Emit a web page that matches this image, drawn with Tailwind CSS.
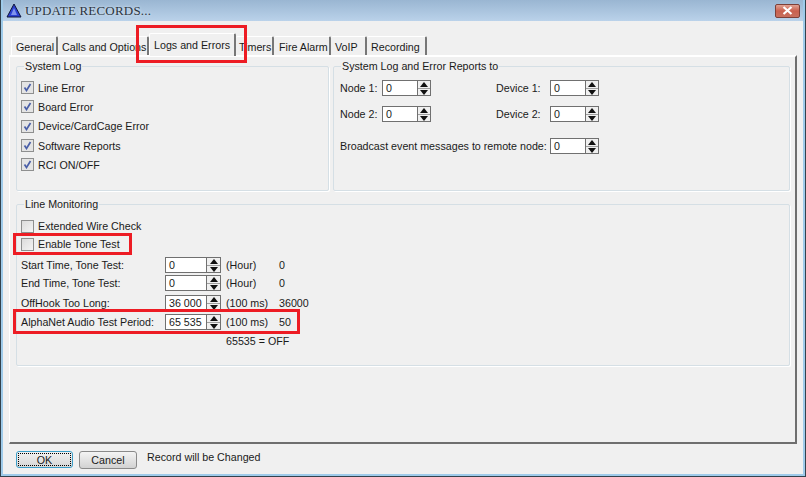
<!DOCTYPE html>
<html lang="en">
  <head>
    <meta charset="UTF-8" />
    <title>UPDATE RECORDS...</title>
    <script src="https://cdn.jsdelivr.net/npm/@tailwindcss/browser@4"></script>
  </head>
  <body class="relative w-[806px] h-[477px] overflow-hidden bg-[#f0f0f0] font-['Liberation_Sans',sans-serif] text-[10.7px] leading-[14px] text-[#1a1a1a] whitespace-nowrap">
    <div class="w-full h-full flex flex-col border-x border-b border-[#33424d]">
      <div class="h-full flex flex-col border-x-2 border-b-2 border-[#9fcbea]">
        <!-- title bar -->
        <div class="h-[21px] shrink-0 flex items-center bg-linear-to-b from-[#9ab6d2] to-[#bad2ea]">
          <svg class="ml-[3px] w-[16px] h-[15px]" viewBox="0 0 16 15">
            <path d="M8 1 L15 14 H1 Z" fill="#2a3fd0" stroke="#10163a" stroke-width="1" />
            <path d="M8 5 L11 12 H5 Z" fill="#7f93ee" />
          </svg>
          <span class="ml-[3px] font-['Liberation_Serif',serif] text-[13px] tracking-[0.2px] text-[#2b3440] [text-shadow:0_0_3px_#e8f0f8]">UPDATE RECORDS...</span>
          <div class="ml-auto mr-[3px] w-[25px] h-[14px] flex items-center justify-center rounded-[2px] border border-[#7d4038] bg-linear-to-b from-[#e0a294] via-[#c9604e] to-[#c8705e]">
            <svg class="w-[11px] h-[9px]" viewBox="0 0 11 9"><path d="M1.5 1 L9.5 8 M9.5 1 L1.5 8" stroke="#fff" stroke-width="2.2" /></svg>
          </div>
        </div>

        <!-- tabs -->
        <div class="mt-[12px] ml-[8px] h-[22px] flex items-end shrink-0">
          <div class="w-[47px] h-[19px] pl-[4px] pt-[3px] border-t border-l border-white border-r-2 border-r-[#777] rounded-t-[2px]">General</div>
          <div class="w-[91px] h-[19px] pl-[4px] pt-[3px] border-t border-white border-r-2 border-r-[#777] rounded-t-[2px]">Calls and Options</div>
          <div class="relative z-10 w-[87px] h-[23px] -mb-[1px] pl-[4px] pt-[4px] bg-[#f0f0f0] border-t border-l border-white border-r-2 border-r-[#777] rounded-t-[2px]">Logs and Errors</div>
          <div class="w-[38px] h-[19px] pl-[3px] pt-[3px] border-t border-white border-r-2 border-r-[#777] rounded-t-[2px]">Timers</div>
          <div class="w-[57px] h-[19px] pl-[5px] pt-[3px] border-t border-white border-r-2 border-r-[#777] rounded-t-[2px]">Fire Alarm</div>
          <div class="w-[36px] h-[19px] pl-[4px] pt-[3px] border-t border-white border-r-2 border-r-[#777] rounded-t-[2px]">VoIP</div>
          <div class="w-[60px] h-[19px] pl-[4px] pt-[3px] border-t border-white border-r-2 border-r-[#777] rounded-t-[2px]">Recording</div>
        </div>

        <!-- tab panel -->
        <div class="ml-[6px] w-[788px] h-[389px] shrink-0 border-t-2 border-l border-white border-r-2 border-r-[#6e6e6e] border-b-2 border-b-[#6e6e6e] pl-[6px] pr-[5px] pt-[2px]">
          <div class="flex gap-[4px]">
            <fieldset class="w-[313px] h-[132px] border border-[#d5dfe5] rounded-[2px] shadow-[1px_1px_0_#fff] pl-[4px]">
              <legend class="ml-[3px] px-[1px]">System Log</legend>
              <div class="pt-[5px] flex flex-col">
                <label class="h-[19.3px] flex items-center gap-[4px]">
                  <span class="w-[13px] h-[13px] border border-[#8e8f8f] bg-[#e4e4e4] flex items-center justify-center">
                    <svg class="w-[9px] h-[9px]" viewBox="0 0 9 9"><path d="M1.5 4.5 L3.5 7.5 L7.5 1" fill="none" stroke="#4a5fa8" stroke-width="1.7" /></svg>
                  </span>
                  Line Error
                </label>
                <label class="h-[19.3px] flex items-center gap-[4px]">
                  <span class="w-[13px] h-[13px] border border-[#8e8f8f] bg-[#e4e4e4] flex items-center justify-center">
                    <svg class="w-[9px] h-[9px]" viewBox="0 0 9 9"><path d="M1.5 4.5 L3.5 7.5 L7.5 1" fill="none" stroke="#4a5fa8" stroke-width="1.7" /></svg>
                  </span>
                  Board Error
                </label>
                <label class="h-[19.3px] flex items-center gap-[4px]">
                  <span class="w-[13px] h-[13px] border border-[#8e8f8f] bg-[#e4e4e4] flex items-center justify-center">
                    <svg class="w-[9px] h-[9px]" viewBox="0 0 9 9"><path d="M1.5 4.5 L3.5 7.5 L7.5 1" fill="none" stroke="#4a5fa8" stroke-width="1.7" /></svg>
                  </span>
                  Device/CardCage Error
                </label>
                <label class="h-[19.3px] flex items-center gap-[4px]">
                  <span class="w-[13px] h-[13px] border border-[#8e8f8f] bg-[#e4e4e4] flex items-center justify-center">
                    <svg class="w-[9px] h-[9px]" viewBox="0 0 9 9"><path d="M1.5 4.5 L3.5 7.5 L7.5 1" fill="none" stroke="#4a5fa8" stroke-width="1.7" /></svg>
                  </span>
                  Software Reports
                </label>
                <label class="h-[19.3px] flex items-center gap-[4px]">
                  <span class="w-[13px] h-[13px] border border-[#8e8f8f] bg-[#e4e4e4] flex items-center justify-center">
                    <svg class="w-[9px] h-[9px]" viewBox="0 0 9 9"><path d="M1.5 4.5 L3.5 7.5 L7.5 1" fill="none" stroke="#4a5fa8" stroke-width="1.7" /></svg>
                  </span>
                  RCI ON/OFF
                </label>
              </div>
            </fieldset>

            <fieldset class="w-[457px] h-[132px] border border-[#d5dfe5] rounded-[2px] shadow-[1px_1px_0_#fff] pl-[6px]">
              <legend class="ml-[1px] px-[1px]">System Log and Error Reports to</legend>
              <div class="pt-[7px] flex flex-col">
                <div class="h-[16px] flex items-center">
                  <span class="w-[42px]">Node 1:</span>
                  <div class="w-[49px] h-[16px] flex">
                    <div class="w-[36px] border border-[#707070] bg-white pl-[3px]">0</div>
                    <div class="w-[13px] border-y border-r border-[#707070] flex flex-col items-center justify-center gap-[1px]">
                      <svg class="w-[8px] h-[5px]" viewBox="0 0 8 5"><path d="M4 0 L8 5 H0 Z" fill="#111" /></svg>
                      <div class="w-full h-px bg-[#a0a0a0]"></div>
                      <svg class="w-[8px] h-[5px]" viewBox="0 0 8 5"><path d="M0 0 H8 L4 5 Z" fill="#111" /></svg>
                    </div>
                  </div>
                  <span class="ml-[65px] w-[54px]">Device 1:</span>
                  <div class="w-[49px] h-[16px] flex">
                    <div class="w-[36px] border border-[#707070] bg-white pl-[3px]">0</div>
                    <div class="w-[13px] border-y border-r border-[#707070] flex flex-col items-center justify-center gap-[1px]">
                      <svg class="w-[8px] h-[5px]" viewBox="0 0 8 5"><path d="M4 0 L8 5 H0 Z" fill="#111" /></svg>
                      <div class="w-full h-px bg-[#a0a0a0]"></div>
                      <svg class="w-[8px] h-[5px]" viewBox="0 0 8 5"><path d="M0 0 H8 L4 5 Z" fill="#111" /></svg>
                    </div>
                  </div>
                </div>
                <div class="mt-[10px] h-[16px] flex items-center">
                  <span class="w-[42px]">Node 2:</span>
                  <div class="w-[49px] h-[16px] flex">
                    <div class="w-[36px] border border-[#707070] bg-white pl-[3px]">0</div>
                    <div class="w-[13px] border-y border-r border-[#707070] flex flex-col items-center justify-center gap-[1px]">
                      <svg class="w-[8px] h-[5px]" viewBox="0 0 8 5"><path d="M4 0 L8 5 H0 Z" fill="#111" /></svg>
                      <div class="w-full h-px bg-[#a0a0a0]"></div>
                      <svg class="w-[8px] h-[5px]" viewBox="0 0 8 5"><path d="M0 0 H8 L4 5 Z" fill="#111" /></svg>
                    </div>
                  </div>
                  <span class="ml-[65px] w-[54px]">Device 2:</span>
                  <div class="w-[49px] h-[16px] flex">
                    <div class="w-[36px] border border-[#707070] bg-white pl-[3px]">0</div>
                    <div class="w-[13px] border-y border-r border-[#707070] flex flex-col items-center justify-center gap-[1px]">
                      <svg class="w-[8px] h-[5px]" viewBox="0 0 8 5"><path d="M4 0 L8 5 H0 Z" fill="#111" /></svg>
                      <div class="w-full h-px bg-[#a0a0a0]"></div>
                      <svg class="w-[8px] h-[5px]" viewBox="0 0 8 5"><path d="M0 0 H8 L4 5 Z" fill="#111" /></svg>
                    </div>
                  </div>
                </div>
                <div class="mt-[16px] h-[16px] flex items-center">
                  <span class="w-[210px]">Broadcast event messages to remote node:</span>
                  <div class="w-[49px] h-[16px] flex">
                    <div class="w-[36px] border border-[#707070] bg-white pl-[3px]">0</div>
                    <div class="w-[13px] border-y border-r border-[#707070] flex flex-col items-center justify-center gap-[1px]">
                      <svg class="w-[8px] h-[5px]" viewBox="0 0 8 5"><path d="M4 0 L8 5 H0 Z" fill="#111" /></svg>
                      <div class="w-full h-px bg-[#a0a0a0]"></div>
                      <svg class="w-[8px] h-[5px]" viewBox="0 0 8 5"><path d="M0 0 H8 L4 5 Z" fill="#111" /></svg>
                    </div>
                  </div>
                </div>
              </div>
            </fieldset>
          </div>

          <fieldset class="mt-[6px] w-[774px] h-[169px] border border-[#d5dfe5] rounded-[2px] shadow-[1px_1px_0_#fff] pl-[4px]">
            <legend class="ml-[3px] px-[1px]">Line Monitoring</legend>
            <div class="pt-[6px] flex flex-col">
              <label class="h-[18px] flex items-center gap-[4px]">
                <span class="w-[13px] h-[13px] border border-[#8e8f8f] bg-linear-to-br from-[#dcdcdc] to-[#f4f4f4]"></span>
                Extended Wire Check
              </label>
              <label class="h-[18px] flex items-center gap-[4px]">
                <span class="w-[13px] h-[13px] border border-[#8e8f8f] bg-linear-to-br from-[#dcdcdc] to-[#f4f4f4]"></span>
                Enable Tone Test
              </label>

              <div class="mt-[4px] h-[16px] flex items-center">
                <span class="w-[144px]">Start Time, Tone Test:</span>
                <div class="w-[56px] h-[16px] flex">
                  <div class="w-[42px] border border-[#707070] bg-white pl-[3px]">0</div>
                  <div class="w-[14px] border-y border-r border-[#707070] flex flex-col items-center justify-center gap-[1px]">
                    <svg class="w-[8px] h-[5px]" viewBox="0 0 8 5"><path d="M4 0 L8 5 H0 Z" fill="#111" /></svg>
                    <div class="w-full h-px bg-[#a0a0a0]"></div>
                    <svg class="w-[8px] h-[5px]" viewBox="0 0 8 5"><path d="M0 0 H8 L4 5 Z" fill="#111" /></svg>
                  </div>
                </div>
                <span class="ml-[5px] w-[53px]">(Hour)</span>
                <span>0</span>
              </div>
              <div class="mt-[2px] h-[16px] flex items-center">
                <span class="w-[144px]">End Time, Tone Test:</span>
                <div class="w-[56px] h-[16px] flex">
                  <div class="w-[42px] border border-[#707070] bg-white pl-[3px]">0</div>
                  <div class="w-[14px] border-y border-r border-[#707070] flex flex-col items-center justify-center gap-[1px]">
                    <svg class="w-[8px] h-[5px]" viewBox="0 0 8 5"><path d="M4 0 L8 5 H0 Z" fill="#111" /></svg>
                    <div class="w-full h-px bg-[#a0a0a0]"></div>
                    <svg class="w-[8px] h-[5px]" viewBox="0 0 8 5"><path d="M0 0 H8 L4 5 Z" fill="#111" /></svg>
                  </div>
                </div>
                <span class="ml-[5px] w-[53px]">(Hour)</span>
                <span>0</span>
              </div>
              <div class="mt-[4px] h-[16px] flex items-center">
                <span class="w-[144px]">OffHook Too Long:</span>
                <div class="w-[56px] h-[16px] flex">
                  <div class="w-[42px] border border-[#707070] bg-white pl-[3px]">36 000</div>
                  <div class="w-[14px] border-y border-r border-[#707070] flex flex-col items-center justify-center gap-[1px]">
                    <svg class="w-[8px] h-[5px]" viewBox="0 0 8 5"><path d="M4 0 L8 5 H0 Z" fill="#111" /></svg>
                    <div class="w-full h-px bg-[#a0a0a0]"></div>
                    <svg class="w-[8px] h-[5px]" viewBox="0 0 8 5"><path d="M0 0 H8 L4 5 Z" fill="#111" /></svg>
                  </div>
                </div>
                <span class="ml-[5px] w-[53px]">(100 ms)</span>
                <span>36000</span>
              </div>
              <div class="mt-[3px] h-[16px] flex items-center">
                <span class="w-[144px]">AlphaNet Audio Test Period:</span>
                <div class="w-[56px] h-[16px] flex">
                  <div class="w-[42px] border border-[#707070] bg-white pl-[3px]">65 535</div>
                  <div class="w-[14px] border-y border-r border-[#707070] flex flex-col items-center justify-center gap-[1px]">
                    <svg class="w-[8px] h-[5px]" viewBox="0 0 8 5"><path d="M4 0 L8 5 H0 Z" fill="#111" /></svg>
                    <div class="w-full h-px bg-[#a0a0a0]"></div>
                    <svg class="w-[8px] h-[5px]" viewBox="0 0 8 5"><path d="M0 0 H8 L4 5 Z" fill="#111" /></svg>
                  </div>
                </div>
                <span class="ml-[5px] w-[53px]">(100 ms)</span>
                <span>50</span>
              </div>
              <div class="mt-[4px] pl-[205px]">65535 = OFF</div>
            </div>
          </fieldset>
        </div>

        <!-- footer -->
        <div class="flex-1 flex items-start pl-[13px] pt-[7px]">
          <button class="w-[57px] h-[17px] rounded-[3px] border border-[#3c9ec8] bg-linear-to-b from-[#f2f2f2] to-[#d6d6d6] p-[1px]">
            <span class="h-full flex items-center justify-center border border-dotted border-black">OK</span>
          </button>
          <button class="ml-[6px] w-[58px] h-[18px] rounded-[3px] border border-[#8a8a8a] bg-linear-to-b from-[#f4f4f4] to-[#d2d2d2]">Cancel</button>
          <span class="ml-[10px] mt-[-1px]">Record will be Changed</span>
        </div>
      </div>
    </div>

    <!-- red annotation boxes -->
    <div class="absolute left-[136px] top-[25px] w-[111px] h-[38px] border-[3px] border-[#ed1c24]"></div>
    <div class="absolute left-[13px] top-[233px] w-[119px] h-[22px] border-[3px] border-[#ed1c24]"></div>
    <div class="absolute left-[13px] top-[309px] w-[287px] h-[25px] border-[3px] border-[#ed1c24]"></div>
  </body>
</html>
